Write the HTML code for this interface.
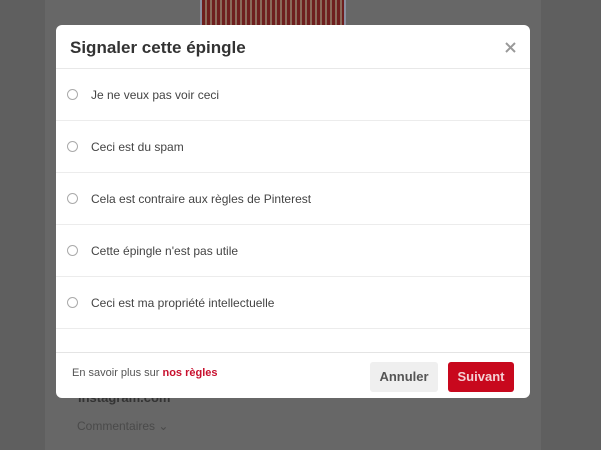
<!DOCTYPE html>
<html><head><meta charset="utf-8"><style>
*{margin:0;padding:0;box-sizing:border-box}
body{width:601px;height:450px;overflow:hidden;background:#5f5f5f;font-family:"Liberation Sans",Arial,sans-serif;position:relative}
.col{position:absolute;left:45px;top:0;width:496px;height:450px;background:#676767}
.img{position:absolute;left:200px;top:0;width:146px;height:26px;background:repeating-linear-gradient(90deg,#6e1e1e 0 3px,#8a6a5a 3px 5px);border-left:2px solid #8a8fa0;border-right:2px solid #8a8fa0}
.bgt{position:absolute;color:#444;font-size:12px}
.modal{position:absolute;left:56px;top:25px;width:474px;height:373px;background:#fff;border-radius:6px;overflow:hidden}
.hd{height:44px;border-bottom:1px solid #e8e8e8;position:relative}
.hd h1{position:absolute;left:14px;top:13px;font-size:17px;font-weight:bold;color:#333}
.x{position:absolute;left:449px;top:17px;width:11px;height:11px}
.row{height:52px;border-bottom:1px solid #ececec;position:relative}
.row span.r{position:absolute;left:11px;top:20px;width:11px;height:11px;border:1px solid #aaa;border-radius:50%}
.row span.t{position:absolute;left:35px;top:19px;font-size:12px;color:#444}
.ft{position:absolute;left:0;top:327px;width:474px;height:46px;border-top:1px solid #e4e4e4}
.ft .l{position:absolute;left:16px;top:14px;font-size:11px;color:#555}
.ft .l b{color:#c8102e}
.btn{position:absolute;top:9px;height:30px;border-radius:3px;font-size:13px;font-weight:bold;line-height:30px;text-align:center}
.a{left:314px;width:68px;background:#efefef;color:#555}
.s{left:392px;width:66px;background:#c8081d;color:#f4d0d4}
</style></head><body>
<div class="col"></div>
<div class="img"></div>
<div class="bgt" style="left:78px;top:390px;font-weight:bold;font-size:13px;color:#333">instagram.com</div>
<div class="bgt" style="left:77px;top:419px;color:#4a4a4a">Commentaires ⌄</div>
<div class="modal">
<div class="hd"><h1>Signaler cette épingle</h1>
<svg class="x" viewBox="0 0 11 11"><path d="M1 1L10 10M10 1L1 10" stroke="#999" stroke-width="2"/></svg></div>
<div class="row"><span class="r"></span><span class="t">Je ne veux pas voir ceci</span></div>
<div class="row"><span class="r"></span><span class="t">Ceci est du spam</span></div>
<div class="row"><span class="r"></span><span class="t">Cela est contraire aux règles de Pinterest</span></div>
<div class="row"><span class="r"></span><span class="t">Cette épingle n'est pas utile</span></div>
<div class="row"><span class="r"></span><span class="t">Ceci est ma propriété intellectuelle</span></div>
<div class="ft"><div class="l">En savoir plus sur <b>nos règles</b></div>
<div class="btn a">Annuler</div><div class="btn s">Suivant</div></div>
</div>
</body></html>
